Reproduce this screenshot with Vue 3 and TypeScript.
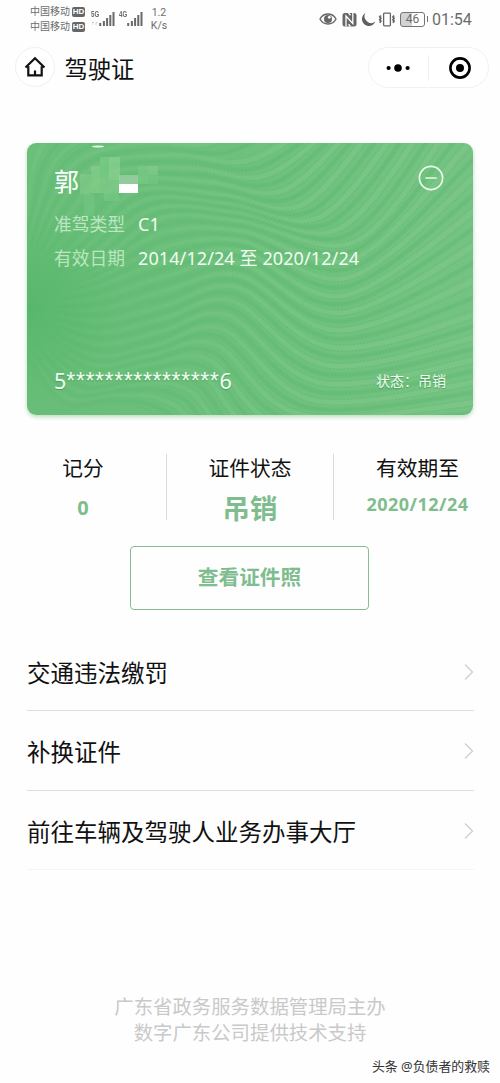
<script setup lang="ts">
type Pt = [number, number]

interface Stat { label: string; value: string; kind: string }

const stats: Stat[] = [
  { label: '记分', value: '0', kind: 'score' },
  { label: '证件状态', value: '吊销', kind: 'state' },
  { label: '有效期至', value: '2020/12/24', kind: 'date' },
]

const links: string[] = ['交通违法缴罚', '补换证件', '前往车辆及驾驶人业务办事大厅']
const carriers: string[] = ['中国移动', '中国移动']
const networks: string[] = ['5G', '4G']

// Key curves of the card's guilloche; the lines between them are interpolated.
const keys: Pt[][] = [
  [[-10, 130], [0, 70], [12, 10], [45, -25], [100, -35], [160, -50]],
  [[0, 140], [28, 70], [70, 22], [150, 12], [220, 18], [290, -20]],
  [[-5, 150], [50, 100], [110, 48], [195, 52], [275, 62], [350, -20]],
  [[-5, 155], [70, 120], [135, 75], [215, 78], [330, 98], [425, -20]],
  [[-5, 160], [65, 145], [140, 118], [215, 108], [320, 152], [470, 50]],
  [[-5, 165], [70, 178], [140, 162], [210, 144], [310, 205], [470, 165]],
  [[-5, 170], [65, 212], [130, 202], [195, 186], [290, 258], [470, 235]],
  [[-5, 180], [55, 238], [115, 232], [175, 232], [250, 300], [470, 300]],
  [[-5, 205], [30, 262], [80, 262], [130, 275], [210, 330], [470, 370]],
]

function curve(p: Pt[]): string {
  let d = `M${p[0][0].toFixed(1)} ${p[0][1].toFixed(1)}`
  for (let i = 0; i < p.length - 1; i++) {
    const a = p[Math.max(0, i - 1)]
    const b = p[i]
    const c = p[i + 1]
    const e = p[Math.min(p.length - 1, i + 2)]
    const n = [
      b[0] + (c[0] - a[0]) / 6, b[1] + (c[1] - a[1]) / 6,
      c[0] - (e[0] - b[0]) / 6, c[1] - (e[1] - b[1]) / 6,
      c[0], c[1],
    ].map((v) => v.toFixed(1))
    d += `C${n.join(' ')}`
  }
  return d
}

function family(steps: number, shift: number): string[] {
  const out: string[] = []
  for (let k = 0; k < keys.length - 1; k++) {
    for (let s = 0; s < steps; s++) {
      const t = (s + shift) / steps
      out.push(curve(keys[k].map((q, i): Pt => [
        q[0] + (keys[k + 1][i][0] - q[0]) * t,
        q[1] + (keys[k + 1][i][1] - q[1]) * t,
      ])))
    }
  }
  return out
}

const bands = family(3, 0)
const grooves = family(3, 0.5)
const threads = family(9, 0.5)

// x, y, width, height, fill
const mosaic: [number, number, number, number, string][] = [
  [53, 31, 11, 20, '#83cb8a'], [64, 23, 9, 27, '#88cf8a'], [73, 14, 10, 22, '#7acc83'],
  [82, 14, 11, 23, '#8cd394'], [73, 36, 19, 14, '#82cc8b'], [57, 51, 10, 22, '#72c681'],
  [67, 51, 10, 12, '#65bd7a'], [77, 48, 15, 10, '#78c785'], [92, 32, 19, 9, '#a6d3ae'],
  [111, 23, 10, 18, '#7bc985'], [121, 23, 10, 9, '#84cd8d'], [121, 32, 10, 9, '#75c482'],
  [92, 41, 19, 9, '#ffffff'],
]
</script>

<template>
  <main class="screen">
    <header class="status">
      <div class="carriers">
        <div v-for="(c, i) in carriers" :key="i" class="carrier">
          <span>{{ c }}</span><b class="hd">HD</b>
        </div>
      </div>
      <div v-for="n in networks" :key="n" class="network">
        <span class="gen">{{ n }}</span>
        <svg width="24" height="18" viewBox="0 0 24 18">
          <path v-if="n === '5G'" d="M1 12.500h2M5 12.500h1.500M1 14h1M4 14h2" stroke="#ccc" stroke-width="1" />
          <path d="M9.200 13v3M12.900 11v5M16.100 8v8M19.300 5v11M22.500 2v14" stroke="#696969" stroke-width="2" />
        </svg>
      </div>
      <div class="speed"><span>1.2</span><span>K/s</span></div>
      <div class="indicators">
        <svg width="18" height="14" viewBox="0 0 18 14" fill="none" stroke="#666">
          <path d="M1 7C4.500 .4 13.500 .4 17 7C13.500 13.600 4.500 13.600 1 7Z" stroke-width="1.400" />
          <circle cx="9" cy="7" r="4" fill="#666" stroke="none" />
          <circle cx="10.300" cy="5.300" r="1.400" fill="#fff" stroke="none" />
        </svg>
        <svg width="15" height="15" viewBox="0 0 15 15">
          <rect x=".5" y="1" width="14" height="13.500" rx="2.500" fill="#666" />
          <path d="M4 14.500V4L10.800 11.500V1M6.500 1L8.500 3.200M6.500 12.200L8.500 14.500" fill="none" stroke="#fff" stroke-width="1.300" />
        </svg>
        <svg width="15" height="15" viewBox="0 0 15 15">
          <path d="M4.500 1A6.900 6.900 0 1 0 14.300 9.500A6.600 6.600 0 0 1 4.500 1Z" fill="#606060" />
        </svg>
        <svg width="18" height="15" viewBox="0 0 18 15" fill="none" stroke="#666">
          <rect x="5.600" y="1.200" width="6.800" height="12.600" rx=".8" stroke-width="1.300" />
          <path d="M2.800 3.500l-1 1.400 1 1.400-1 1.400 1 1.400-1 1.600M16 3.500l-1 1.400 1 1.400-1 1.400 1 1.400-1 1.600" stroke-width="1.800" />
        </svg>
        <div class="battery"><span>46</span></div>
        <time class="clock">01:54</time>
      </div>
    </header>

    <nav class="nav">
      <button class="home" aria-label="首页">
        <svg width="22" height="22" viewBox="0 0 22 22" fill="none" stroke="#111" stroke-width="2.200">
          <path d="M1.500 11.500L11 2.300L20.500 11.500M4.300 10.200V19.300H17.700V10.200M11 14.500V19" />
        </svg>
      </button>
      <h1>驾驶证</h1>
      <div class="capsule">
        <svg class="dots" width="26" height="10" viewBox="0 0 26 10">
          <circle cx="3.600" cy="5" r="2.100" /><circle cx="13" cy="5" r="3.800" /><circle cx="22.600" cy="5" r="2.100" />
        </svg>
        <i class="split"></i>
        <svg class="target" width="24" height="24" viewBox="0 0 24 24">
          <circle cx="12" cy="12" r="9.600" fill="none" stroke="#000" stroke-width="2.600" />
          <circle cx="12" cy="12" r="4" />
        </svg>
      </div>
    </nav>

    <section class="license">
      <svg class="pattern" width="446" height="272" viewBox="0 0 446 272" fill="none">
        <defs>
          <radialGradient id="base" gradientUnits="userSpaceOnUse" cx="0" cy="165" r="440">
            <stop offset="0" stop-color="#58b76c" />
            <stop offset=".22" stop-color="#68be78" />
            <stop offset="1" stop-color="#74c382" />
          </radialGradient>
          <radialGradient id="fade" gradientUnits="userSpaceOnUse" cx="0" cy="165" r="300">
            <stop offset="0" stop-color="#fff" stop-opacity="0" />
            <stop offset=".3" stop-color="#fff" stop-opacity=".4" />
            <stop offset="1" stop-color="#fff" />
          </radialGradient>
          <mask id="veil"><rect width="446" height="272" fill="url(#fade)" /></mask>
        </defs>
        <rect width="446" height="272" fill="url(#base)" />
        <g mask="url(#veil)">
          <path v-for="(d, i) in bands" :key="'b' + i" :d="d" class="band" />
          <path v-for="(d, i) in grooves" :key="'g' + i" :d="d" class="groove" />
          <path v-for="(d, i) in threads" :key="'t' + i" :d="d" class="thread" />
        </g>
        <ellipse cx="71" cy="3.500" rx="6" ry="1" fill="#e5f5e6" />
        <rect
          v-for="(m, i) in mosaic" :key="'m' + i"
          :x="m[0]" :y="m[1]" :width="m[2]" :height="m[3]" :fill="m[4]"
          :opacity="m[4] === '#ffffff' ? 1 : 0.65"
        />
      </svg>
      <div class="content">
        <div class="top">
          <span class="name">郭</span>
          <svg width="26" height="26" viewBox="0 0 26 26" fill="none" stroke="#e9fbe9" stroke-width="1.700">
            <circle cx="13" cy="13" r="11.600" /><path d="M7.300 13h11.400" />
          </svg>
        </div>
        <dl>
          <div><dt>准驾类型</dt><dd>C1</dd></div>
          <div><dt>有效日期</dt><dd>2014/12/24 至 2020/12/24</dd></div>
        </dl>
        <div class="bottom">
          <span class="number">5<span class="stars">****************</span>6</span>
          <span class="condition">状态：吊销</span>
        </div>
      </div>
    </section>

    <section class="stats">
      <div v-for="s in stats" :key="s.label" class="stat">
        <span class="label">{{ s.label }}</span>
        <strong :class="s.kind">{{ s.value }}</strong>
      </div>
    </section>

    <button class="photo">查看证件照</button>

    <ul class="links">
      <li v-for="l in links" :key="l">
        <span>{{ l }}</span>
        <svg width="10" height="18" viewBox="0 0 10 18" fill="none" stroke="#cfcfcf" stroke-width="1.300">
          <path d="M1 1.500L8.500 9L1 16.500" />
        </svg>
      </li>
    </ul>

    <footer>
      <p>广东省政务服务数据管理局主办</p>
      <p>数字广东公司提供技术支持</p>
    </footer>
    <div class="credit">头条 @负债者的救赎</div>
  </main>
</template>

<style>
body { margin: 0; background: #fefefe; }
</style>

<style scoped>
.screen {
  box-sizing: border-box;
  width: 500px;
  height: 1083px;
  overflow: hidden;
  display: flex;
  flex-direction: column;
  background: #fefefe;
  color: #111;
  font-family: "Noto Sans", "Noto Sans CJK SC", sans-serif;
}
.screen * { box-sizing: border-box; }
svg { display: block; flex: none; }
button { padding: 0; font-family: inherit; }

.status {
  height: 40px;
  padding: 4px 28px 0 30px;
  display: flex;
  align-items: flex-start;
  color: #6c6c6c;
}
.carriers { width: 61px; }
.carrier {
  height: 15px;
  display: flex;
  align-items: center;
  gap: 2px;
  font-size: 10px;
  line-height: 15px;
  white-space: nowrap;
}
.hd {
  width: 13px;
  height: 10px;
  border-radius: 2px;
  background: #666;
  color: #fff;
  font: 700 8px/10px "Liberation Sans", sans-serif;
  text-align: center;
}
.network { width: 28px; height: 24px; padding-top: 6px; position: relative; }
.gen {
  position: absolute;
  left: 0;
  top: 6px;
  font: 700 8.500px/9px "Liberation Sans", sans-serif;
  transform: scaleX(.72);
  transform-origin: left;
}
.speed {
  width: 20px;
  margin-left: 2px;
  display: flex;
  flex-direction: column;
  align-items: center;
  font: 10.500px/13px Roboto, sans-serif;
  padding-top: 2px;
}
.indicators {
  margin-left: auto;
  height: 30px;
  display: flex;
  align-items: center;
}
.indicators svg + svg { margin-left: 5px; }
.indicators svg:nth-of-type(3) { margin-left: 4px; }
.indicators svg:nth-of-type(4) { margin-left: 2px; }
.battery {
  position: relative;
  width: 25px;
  height: 15px;
  margin-left: 4px;
  border: 1.500px solid #747474;
  border-radius: 3px;
  background: linear-gradient(90deg, #d2d2d2 46%, #fff 46%);
  font: 12px/13px Roboto, sans-serif;
  text-align: center;
}
.battery::after {
  content: "";
  position: absolute;
  right: -4px;
  top: 3px;
  width: 1.500px;
  height: 6px;
  background: #747474;
}
.clock {
  width: 40px;
  margin-left: 7px;
  padding-top: 1px;
  font: 16px/20px Roboto, sans-serif;
  white-space: nowrap;
}

.nav {
  height: 103px;
  padding: 7px 11px 0 15px;
  display: flex;
  align-items: flex-start;
}
.home {
  width: 40px;
  height: 40px;
  border: 1.500px solid #f0f0f0;
  border-radius: 50%;
  background: #fff;
  display: grid;
  place-items: center;
}
h1 {
  margin: 0 0 0 9.500px;
  font-size: 23.300px;
  font-weight: 400;
  line-height: 44px;
}
.capsule {
  width: 121px;
  height: 41px;
  margin-left: auto;
  border: 1.500px solid #f1f1f1;
  border-radius: 21px;
  background: #fff;
  display: flex;
  align-items: center;
}
.dots { margin-left: 16px; }
.split { width: 1px; height: 26px; margin-left: 17px; background: #f1f1f1; }
.target { margin-left: 19px; }

.license {
  position: relative;
  width: 446px;
  height: 272px;
  margin-left: 27px;
  border-radius: 9px;
  overflow: hidden;
  box-shadow: 0 2px 4px #bcdcbf;
  flex: none;
}
.pattern { position: absolute; inset: 0; }
.band { stroke: #90d098; stroke-width: 5; stroke-opacity: .26; }
.groove { stroke: #55b46a; stroke-width: 5; stroke-opacity: .24; }
.thread { stroke: #4fa865; stroke-width: 1.600; stroke-opacity: .17; stroke-dasharray: 1.800 1.800; }
.content {
  position: relative;
  height: 100%;
  padding: 22px 27px 0;
  display: flex;
  flex-direction: column;
  color: #f1fdf1;
}
.top { display: flex; justify-content: space-between; padding-right: 2px; }
.name { font-size: 25px; line-height: 32px; color: #fff; }
dl { margin: 10px 0 0; }
dl div { display: flex; height: 34px; line-height: 34px; font-size: 17.800px; }
dt { width: 84px; color: #bce6c0; }
dd { margin: 0; font-size: 18px; letter-spacing: .1px; white-space: nowrap; }
.bottom {
  height: 40px;
  display: flex;
  align-items: center;
  justify-content: space-between;
  margin-top: 86px;
  text-shadow: 0 1px 1px #4c9e5c;
}
.number { font-size: 21.500px; line-height: 36px; }
.stars { font-family: "Liberation Sans", sans-serif; font-size: 23px; line-height: 1; letter-spacing: .62px; }
.condition { font-size: 14px; padding-bottom: 3px; }

.stats {
  width: 501px;
  height: 66px;
  margin-top: 39px;
  display: grid;
  grid-template: 66px / repeat(3, 167px);
  flex: none;
}
.stat {
  display: flex;
  flex-direction: column;
  align-items: center;
  border-right: 1px solid #dadada;
}
.stat:last-child { border-right: 0; }
.label { font-size: 20.700px; line-height: 28px; }
strong { color: #7fbd8f; white-space: nowrap; }
.score { font-size: 20px; line-height: 51px; }
.state { font-size: 27.400px; line-height: 53px; }
.date { font-size: 18px; line-height: 44px; letter-spacing: .45px; }

.photo {
  width: 239px;
  height: 64px;
  margin: 26px 0 0 130px;
  padding-bottom: 4px;
  border: 1.500px solid #86bd92;
  border-radius: 4px;
  background: transparent;
  color: #7fbd8f;
  font-size: 20.700px;
  font-weight: 600;
  flex: none;
}

.links { margin: 22px 26px 0 27px; padding: 0; list-style: none; }
.links li {
  height: 79.300px;
  padding-top: 2px;
  display: flex;
  align-items: center;
  justify-content: space-between;
  border-bottom: 1.300px solid #dedede;
  font-size: 23.500px;
}
.links li:last-child { border-color: #f4f4f4; }

footer {
  margin-top: 124px;
  text-align: center;
  font-size: 19.400px;
  line-height: 26px;
  color: #c9c9c9;
}
footer p { margin: 0; }
.credit {
  margin: 10px 10px 0 auto;
  font-size: 12.900px;
  line-height: 20px;
  color: #333;
  white-space: nowrap;
}
</style>
